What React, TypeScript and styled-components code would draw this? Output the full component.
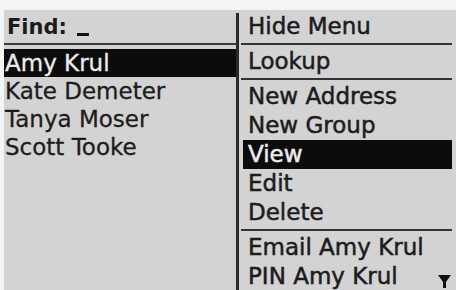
import React from 'react'
import styled, { createGlobalStyle } from 'styled-components'

const Global = createGlobalStyle`
  html, body {
    margin: 0;
    padding: 0;
    background: #f4f4f4;
  }
  body {
    font-family: 'DejaVu Sans', 'Liberation Sans', sans-serif;
    color: #1c1c1c;
  }
`

const Screen = styled.div`
  margin: 10px 0 0 4px;
  width: 452px;
  height: 280px;
  background: #d3d3d3;
  display: grid;
  grid-template-columns: 232px 4px 1fr;
  overflow: hidden;
`

const Contacts = styled.div`
  display: flex;
  flex-direction: column;
`

const FindRow = styled.div`
  height: 33px;
  display: flex;
  align-items: center;
  padding-left: 3px;
  font-size: 21px;
  font-weight: bold;
  gap: 10px;
`

const Cursor = styled.span`
  display: inline-block;
  width: 12px;
  height: 3px;
  background: #111;
  margin-top: 16px;
`

const Rule = styled.div`
  height: 2px;
  background: #3a3a3a;
  margin: 0 0 4px;
`

const Name = styled.div<{ $active?: boolean }>`
  height: 28px;
  line-height: 28px;
  font-size: 23px;
  padding-left: 1px;
  white-space: nowrap;
  -webkit-text-stroke: 0.3px currentColor;
  background: ${p => (p.$active ? '#0c0c0c' : 'transparent')};
  color: ${p => (p.$active ? '#ececec' : '#1c1c1c')};
`

const Divider = styled.div`
  margin-top: 3px;
  width: 3px;
  background: #2a2a2a;
`

const Menu = styled.div`
  position: relative;
  display: flex;
  flex-direction: column;
  padding: 2px 4px 0 1px;
`

const Item = styled.div<{ $active?: boolean }>`
  height: 29px;
  line-height: 29px;
  font-size: 23px;
  padding-left: 5px;
  margin-left: 2px;
  white-space: nowrap;
  -webkit-text-stroke: 0.5px currentColor;
  background: ${p => (p.$active ? '#0c0c0c' : 'transparent')};
  color: ${p => (p.$active ? '#ececec' : '#1c1c1c')};
`

const Separator = styled.div`
  height: 2px;
  margin: 2px 0;
  background: #333;
`

const MoreArrow = styled.svg`
  position: absolute;
  right: 5px;
  bottom: 3px;
  display: block;
`

const contacts = ['Amy Krul', 'Kate Demeter', 'Tanya Moser', 'Scott Tooke']

const groups = [
  ['Hide Menu'],
  ['Lookup'],
  ['New Address', 'New Group', 'View', 'Edit', 'Delete'],
  ['Email Amy Krul', 'PIN Amy Krul'],
]

const App = () => {
  return (
    <>
      <Global />
      <Screen>
        <Contacts>
          <FindRow>
            Find:
            <Cursor />
          </FindRow>
          <Rule />
          {contacts.map((c, i) => (
            <Name key={c} $active={i === 0}>
              {c}
            </Name>
          ))}
        </Contacts>
        <Divider />
        <Menu>
          {groups.map((g, gi) => (
            <React.Fragment key={gi}>
              {gi > 0 && <Separator />}
              {g.map(label => (
                <Item key={label} $active={label === 'View'}>
                  {label}
                </Item>
              ))}
            </React.Fragment>
          ))}
          <MoreArrow width='13' height='13' viewBox='0 0 13 13'>
            <polygon points='0,0 13,0 6.5,9' fill='#111' />
            <rect x='5' y='6' width='3' height='7' fill='#111' />
          </MoreArrow>
        </Menu>
      </Screen>
    </>
  )
}

export default App
